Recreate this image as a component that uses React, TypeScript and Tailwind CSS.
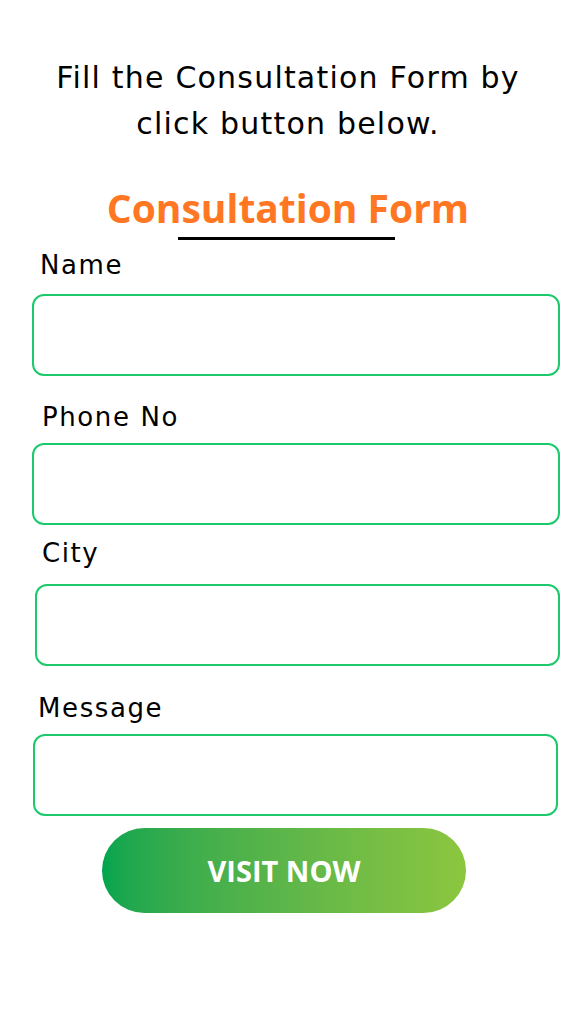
import React from "react";

const FONT = { fontFamily: '"DejaVu Sans", "Open Sans", sans-serif' };
const BOLD = { fontFamily: '"Open Sans", "Liberation Sans", sans-serif' };

type Field = { label: string; labelCls: string; boxCls: string };

const FIELDS: Field[] = [
  { label: "Name", labelCls: "mt-[10px] pl-[40px]", boxCls: "mt-[14px] ml-[32px] w-[528px]" },
  { label: "Phone No", labelCls: "mt-[26px] pl-[42px]", boxCls: "mt-[11px] ml-[32px] w-[528px]" },
  { label: "City", labelCls: "mt-[13px] pl-[42px]", boxCls: "mt-[16px] ml-[35px] w-[525px]" },
  { label: "Message", labelCls: "mt-[27px] pl-[38px]", boxCls: "mt-[11px] ml-[33px] w-[525px]" },
];

export default function App() {
  return (
    <div className="w-[576px] h-[1024px] bg-white flex flex-col" style={FONT}>
      {/* Intro */}
      <p className="pt-[55px] text-center text-[30px] leading-[46px] tracking-[1.2px] text-black">
        Fill the Consultation Form by
        <br />
        click button below.
      </p>

      {/* Title */}
      <h1
        className="mt-[37px] text-center text-[39px] leading-[48px] font-bold text-[#ff7722]"
        style={BOLD}
      >
        Consultation Form
      </h1>
      <div className="mt-[5px] ml-[178px] w-[217px] h-[3px] bg-black" />

      {/* Fields */}
      {FIELDS.map(f => (
        <div key={f.label} className="flex flex-col">
          <label className={`${f.labelCls} text-[26px] leading-[30px] tracking-[1.6px] text-black`}>
            {f.label}
          </label>
          <input
            className={`${f.boxCls} h-[82px] rounded-[12px] border-[2.5px] border-[#1cca6b] bg-white outline-none px-4 text-lg`}
          />
        </div>
      ))}

      {/* Button */}
      <button
        className="mt-[12px] ml-[102px] w-[364px] h-[85px] rounded-full bg-gradient-to-r from-[#00a54f] to-[#8cc63f] text-white text-[29px] font-bold flex items-center justify-center"
        style={BOLD}
      >
        VISIT NOW
      </button>
    </div>
  );
}
